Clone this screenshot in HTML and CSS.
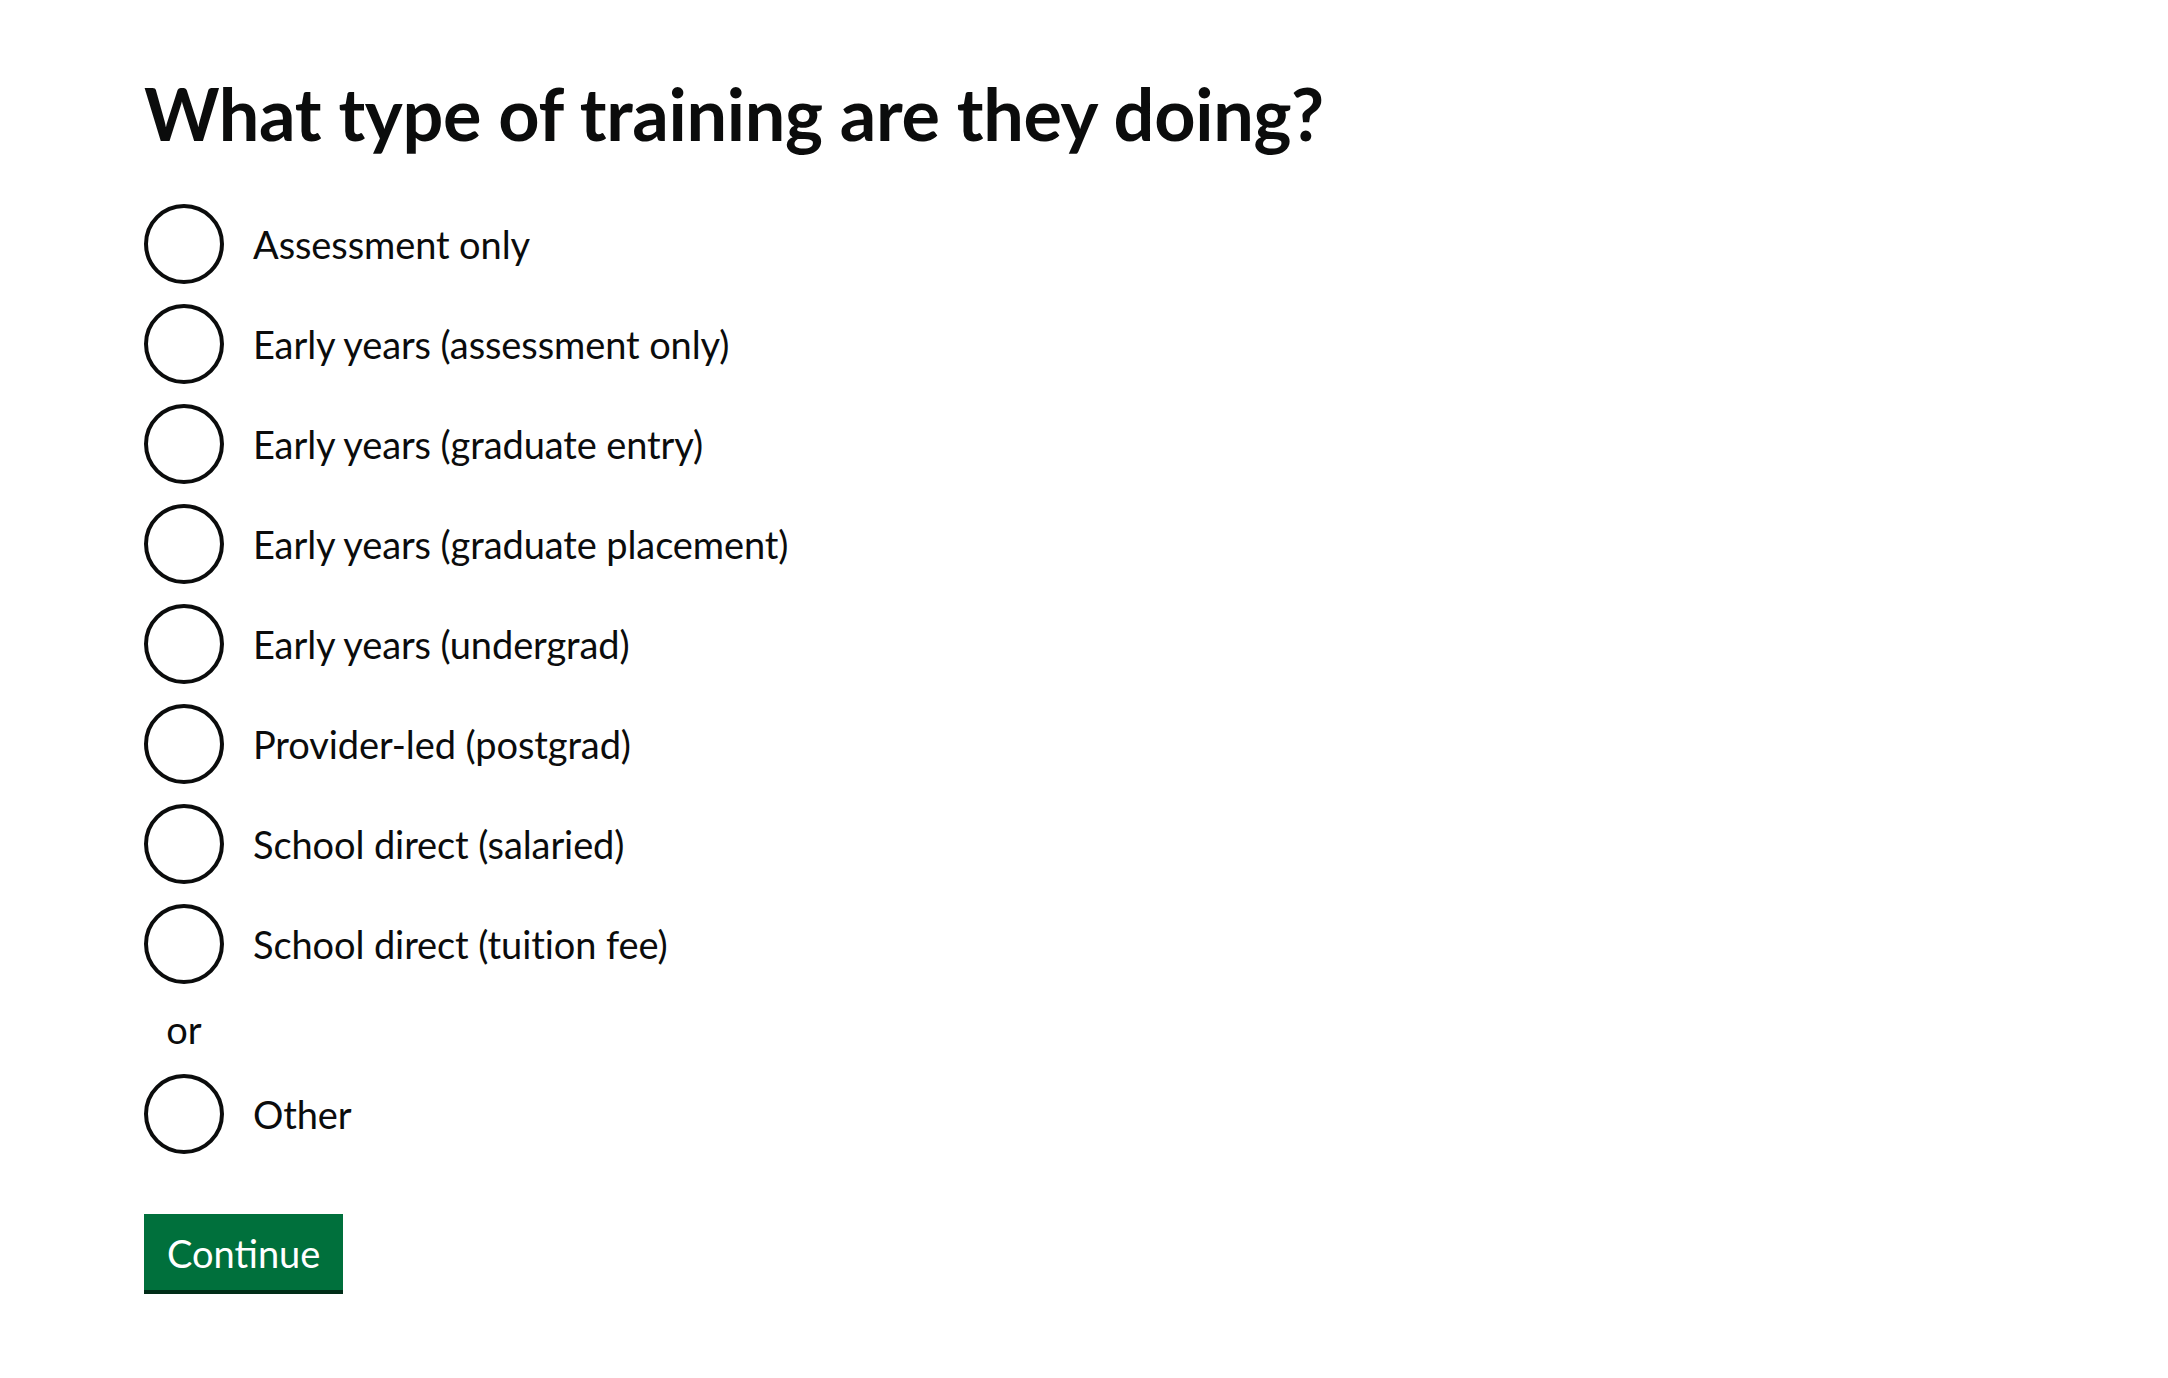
FILE: index.html
```html
<!DOCTYPE html>
<html lang="en">
<head>
<meta charset="utf-8">
<title>What type of training are they doing?</title>
<link rel="stylesheet" href="styles.css">
</head>
<body>
<main class="page">
  <form class="form">
    <div class="form-group">
      <fieldset class="fieldset">
        <legend class="legend"><h1 class="heading">What type of training are they doing?</h1></legend>
        <div class="radios">
          <div class="radio-item"><input class="radio-input" type="radio" name="t" id="t1"><label class="radio-label" for="t1">Assessment only</label></div>
          <div class="radio-item"><input class="radio-input" type="radio" name="t" id="t2"><label class="radio-label" for="t2">Early years (assessment only)</label></div>
          <div class="radio-item"><input class="radio-input" type="radio" name="t" id="t3"><label class="radio-label" for="t3">Early years (graduate entry)</label></div>
          <div class="radio-item"><input class="radio-input" type="radio" name="t" id="t4"><label class="radio-label" for="t4">Early years (graduate placement)</label></div>
          <div class="radio-item"><input class="radio-input" type="radio" name="t" id="t5"><label class="radio-label" for="t5">Early years (undergrad)</label></div>
          <div class="radio-item"><input class="radio-input" type="radio" name="t" id="t6"><label class="radio-label" for="t6">Provider-led (postgrad)</label></div>
          <div class="radio-item"><input class="radio-input" type="radio" name="t" id="t7"><label class="radio-label" for="t7">School direct (salaried)</label></div>
          <div class="radio-item"><input class="radio-input" type="radio" name="t" id="t8"><label class="radio-label" for="t8">School direct (tuition fee)</label></div>
          <div class="divider">or</div>
          <div class="radio-item last"><input class="radio-input" type="radio" name="t" id="t9"><label class="radio-label" for="t9">Other</label></div>
        </div>
      </fieldset>
    </div>
    <button class="button" type="submit">Continue</button>
  </form>
</main>
</body>
</html>
```

FILE: styles.css
```css
html, body {
  margin: 0;
  padding: 0;
  background: #ffffff;
}
body {
  font-family: Lato, "Liberation Sans", Arial, sans-serif;
  color: #0b0c0c;
}
.page {
  padding: 73px 0 0 144px;
}
.form {
  margin: 0;
}
.form-group {
  margin-bottom: 60px;
}
.fieldset {
  margin: 0;
  padding: 0;
  border: 0;
  min-width: 0;
}
.legend {
  padding: 0;
  margin: 0 0 51px 0;
}
.heading {
  margin: 0;
  font-size: 72px;
  line-height: 80px;
  font-weight: 700;
  letter-spacing: -0.33px;
  color: #0b0c0c;
}
.radios {
  display: flex;
  flex-direction: column;
}
.radio-item {
  display: flex;
  align-items: center;
  min-height: 80px;
  margin-bottom: 20px;
}
.radio-item.last {
  margin-bottom: 0;
}
.radio-input {
  -webkit-appearance: none;
  appearance: none;
  box-sizing: border-box;
  flex: none;
  width: 80px;
  height: 80px;
  margin: 0;
  border: 4px solid #0b0c0c;
  border-radius: 50%;
  background: #ffffff;
}
.radio-label {
  padding: 0 30px 0 29px;
  font-size: 38px;
  line-height: 50px;
  letter-spacing: -0.1px;
  color: #0b0c0c;
}
.divider {
  width: 80px;
  margin-bottom: 20px;
  text-align: center;
  font-size: 38px;
  line-height: 50px;
  color: #0b0c0c;
}
.button {
  display: block;
  box-sizing: border-box;
  margin: 0;
  padding: 20px 23px 18px;
  border: 0;
  border-bottom: 4px solid #002d18;
  border-radius: 0;
  background: #00703c;
  color: #ffffff;
  font-family: Lato, "Liberation Sans", Arial, sans-serif;
  font-size: 38px;
  line-height: 38px;
  font-weight: 400;
  cursor: pointer;
}
```
